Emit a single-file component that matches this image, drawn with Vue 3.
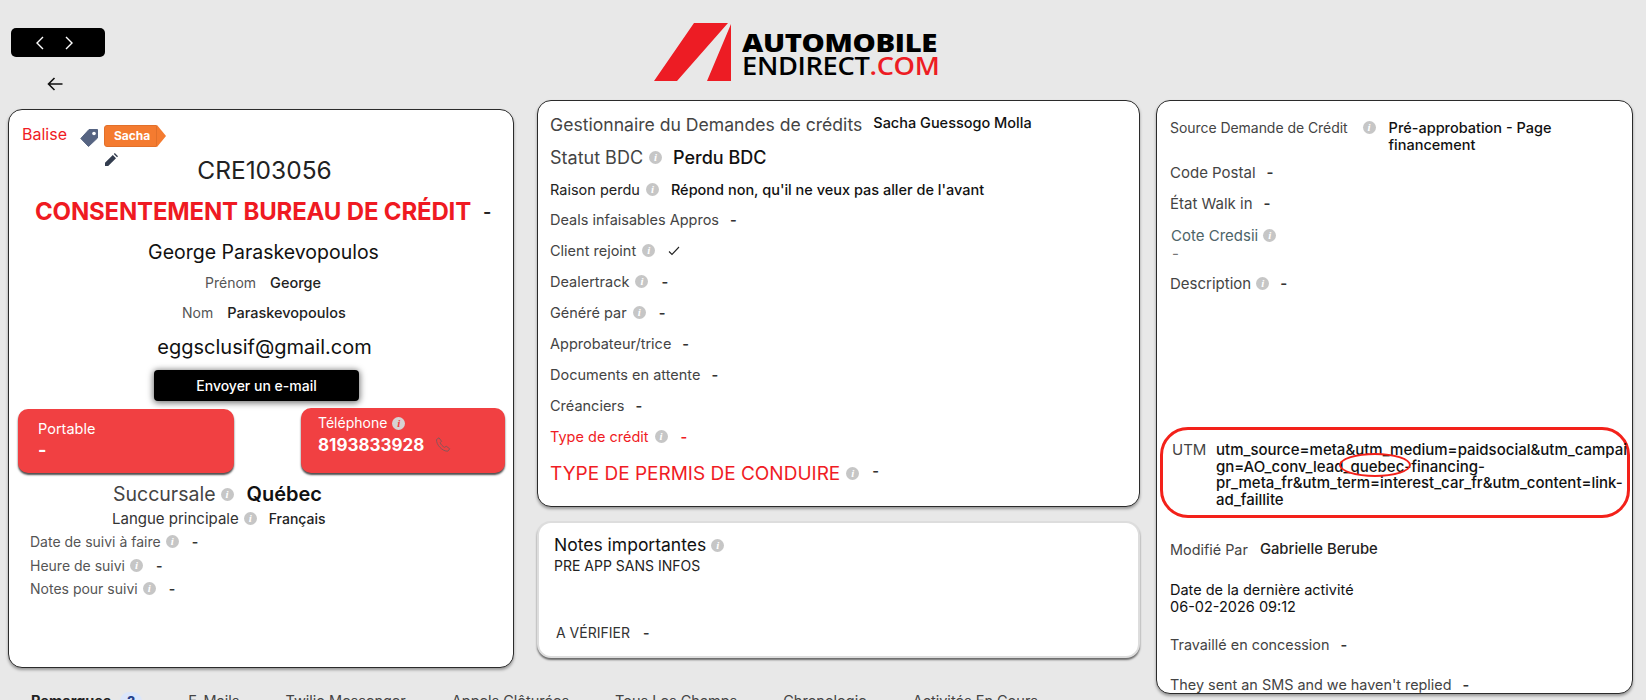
<script setup>
const midRows = [
  { label: 'Deals infaisables Appros', dash: true },
  { label: 'Client rejoint', info: true, check: true },
  { label: 'Dealertrack', info: true, dash: true },
  { label: 'Généré par', info: true, dash: true },
  { label: 'Approbateur/trice', dash: true },
  { label: 'Documents en attente', dash: true },
  { label: 'Créanciers', dash: true },
]
const followRows = [
  { label: 'Date de suivi à faire' },
  { label: 'Heure de suivi' },
  { label: 'Notes pour suivi' },
]
const tabs = ['E-Mails', 'Twilio Messenger', 'Appels Clôturées', 'Tous Les Champs', 'Chronologie', 'Activités En Cours']
</script>

<template>
  <div class="page">
    <div class="main">
      <div class="cols">
        <div class="col-left">
          <div class="nav">
            <svg width="10" height="14" viewBox="0 0 10 14"><path d="M8 1 2 7l6 6" fill="none" stroke="#fff" stroke-width="1.4"/></svg>
            <svg width="10" height="14" viewBox="0 0 10 14"><path d="M2 1l6 6-6 6" fill="none" stroke="#fff" stroke-width="1.4"/></svg>
          </div>
          <svg class="back" width="16" height="14" viewBox="0 0 16 14"><path d="M15.5 7H1.5M7.5 1 1.5 7l6 6" fill="none" stroke="#111" stroke-width="1.6"/></svg>
          <div class="peek">
            <svg width="30" height="3" viewBox="0 0 30 3"><path d="M3 0 1 3M26 0l2 3" stroke="#2a8c96" stroke-width="1" fill="none"/></svg>
          </div>
          <div class="card card-left">
            <div class="tagrow">
              <span class="balise">Balise</span>
              <svg class="tag" width="19" height="19" viewBox="0 0 19 19"><path d="M9 1.5h8.5V10L8.5 18.500 .8 10.500Z" fill="#566482" stroke="#566482" stroke-linejoin="round"/><circle cx="14" cy="5.500" r="1.800" fill="#fff"/></svg>
              <span class="sacha">Sacha</span>
              <svg class="pencil" width="13" height="13" viewBox="0 0 13 13"><path d="M0 13V9.800L7.800 2l3.200 3.200L3.200 13ZM8.800 1l1-1 3.200 3.200-1 1Z" fill="#333d4f"/></svg>
            </div>
            <div class="cre">CRE103056</div>
            <div class="consent"><span class="consent-t">CONSENTEMENT BUREAU DE CRÉDIT</span><span class="consent-d">-</span></div>
            <div class="fullname">George Paraskevopoulos</div>
            <div class="pair p1"><span class="lab">Prénom</span><span class="val">George</span></div>
            <div class="pair p2"><span class="lab">Nom</span><span class="val">Paraskevopoulos</span></div>
            <div class="email">eggsclusif@gmail.com</div>
            <div class="btn">Envoyer un e-mail</div>
            <div class="phones">
              <div class="ph ph-a">
                <div class="ph-l">Portable</div>
                <div class="ph-d">-</div>
              </div>
              <div class="ph ph-b">
                <div class="ph-l2">Téléphone<i class="info on-red">i</i></div>
                <div class="ph-n">8193833928
                  <svg class="call" width="16" height="16" viewBox="0 0 16 16"><path d="M1.500 2.500 4 .8l2.500 3.400-1.300 1.500c.8 2 2.400 3.700 4.500 4.700l1.500-1.200 3.500 2.600-1.800 2.400C7.500 14.500 1.200 8 1.500 2.500Z" fill="none" stroke="#8a5558" stroke-width="1"/></svg>
                </div>
              </div>
            </div>
            <div class="succ"><span class="succ-l">Succursale</span><i class="info">i</i><span class="succ-v">Québec</span></div>
            <div class="lang"><span class="lang-l">Langue principale</span><i class="info">i</i><span class="lang-v">Français</span></div>
            <div v-for="r in followRows" :key="r.label" class="follow">
              <span>{{ r.label }}</span><i class="info">i</i><span class="dash">-</span>
            </div>
          </div>
        </div>

        <div class="col-mid">
          <div class="logo">
            <svg class="logo-mark" width="78" height="58" viewBox="0 0 78 58"><path d="M40 0H74L23 58H0ZM77 1V58H53Z" fill="#ed1c24"/></svg>
            <div class="logo-text">
              <div class="l1">AUTOMOBILE</div>
              <div class="l2">ENDIRECT<span class="com">.COM</span></div>
            </div>
          </div>
          <div class="card card-mid">
            <div class="mrow h32"><span class="big gest">Gestionnaire du Demandes de crédits</span><span class="mgr">Sacha Guessogo Molla</span></div>
            <div class="mrow h34"><span class="big">Statut BDC</span><i class="info">i</i><span class="stat">Perdu BDC</span></div>
            <div class="mrow h30"><span class="dark">Raison perdu</span><i class="info">i</i><span class="reason">Répond non, qu'il ne veux pas aller de l'avant</span></div>
            <div v-for="r in midRows" :key="r.label" class="mrow h31">
              <span>{{ r.label }}</span><i v-if="r.info" class="info">i</i>
              <svg v-if="r.check" class="check" width="12" height="10" viewBox="0 0 12 10"><path d="M1 5.500 4 8.500 11 1" fill="none" stroke="#222" stroke-width="1.100"/></svg>
              <span v-if="r.dash" class="dash">-</span>
            </div>
            <div class="mrow h31 red"><span>Type de crédit</span><i class="info">i</i><span class="dash red">-</span></div>
            <div class="mrow h42 red"><span class="permis">TYPE DE PERMIS DE CONDUIRE</span><i class="info">i</i><span class="dash up">-</span></div>
          </div>
          <div class="card card-notes">
            <div class="notes-t">Notes importantes<i class="info">i</i></div>
            <div class="notes-b">PRE APP SANS INFOS</div>
            <div class="notes-v"><span>A VÉRIFIER</span><span class="dash">-</span></div>
          </div>
        </div>
      </div>
      <div class="tabs">
        <span class="tab-on">Remarques<b class="badge">2</b></span>
        <span v-for="t in tabs" :key="t">{{ t }}</span>
      </div>
    </div>

    <div class="col-right">
      <div class="card card-right">
        <div class="src"><span class="r-l">Source Demande de Crédit</span><i class="info">i</i><span class="src-v">Pré-approbation - Page financement</span></div>
        <div class="rrow m8"><span>Code Postal</span><span class="dash">-</span></div>
        <div class="rrow m9"><span>État Walk in</span><span class="dash">-</span></div>
        <div class="rrow m10 cote"><span>Cote Credsii</span><i class="info">i</i></div>
        <div class="cote-d">-</div>
        <div class="rrow m11"><span>Description</span><i class="info">i</i><span class="dash">-</span></div>
        <div class="utm">
          <span class="utm-l">UTM</span>
          <span class="utm-v">utm_source=meta&amp;utm_medium=paidsocial&amp;utm_campaign=AO_conv_lead_quebec-financing-pr_meta_fr&amp;utm_term=interest_car_fr&amp;utm_content=link-ad_faillite</span>
          <span class="ellipse"></span>
        </div>
        <div class="rrow m20 t14"><span>Modifié Par</span><span class="mod-v">Gabrielle Berube</span></div>
        <div class="last">Date de la dernière activité<br>06-02-2026 09:12</div>
        <div class="rrow m18 t14"><span>Travaillé en concession</span><span class="dash">-</span></div>
        <div class="rrow m18 t14"><span>They sent an SMS and we haven't replied</span><span class="dash">-</span></div>
      </div>
    </div>
  </div>
</template>

<style scoped>
.page {
  width: 1646px;
  height: 700px;
  overflow: hidden;
  display: flex;
  background: #e8e8e8;
  font-family: Inter, "Liberation Sans", sans-serif;
  color: #444;
  font-size: 14px;
}
.main { width: 1156px; flex: none; }
.cols { display: flex; height: 692px; padding-left: 8px; box-sizing: border-box; }
.card {
  background: #fff;
  border: 1px solid #2b2b2b;
  border-radius: 14px;
  box-sizing: border-box;
  box-shadow: 0 2px 3px rgba(0, 0, 0, .35);
}
.info {
  display: inline-flex;
  align-items: center;
  justify-content: center;
  flex: none;
  width: 13px;
  height: 13px;
  margin-left: 5px;
  border-radius: 50%;
  background: #c6c6c6;
  color: #fff;
  font: italic 700 11px/1 "Liberation Serif", serif;
}
.dash { font-weight: 600; color: #333; margin-left: 13px; }
.col-left { width: 506px; flex: none; }
.nav {
  margin: 28px 0 0 3px;
  width: 94px;
  height: 29px;
  background: #000;
  border-radius: 5px;
  display: flex;
  align-items: center;
  gap: 19px;
  padding-left: 24px;
  box-sizing: border-box;
}
.back { display: block; margin: 20px 0 0 39px; }
.peek { height: 2px; margin-top: 16px; padding-left: 319px; overflow: hidden; line-height: 0; }
.card-left { height: 559px; width: 506px; padding: 0 8px 0 9px; }
.tagrow { position: relative; height: 46px; display: flex; }
.balise { color: #f01c24; font-size: 16px; line-height: 20px; margin: 14px 0 0 4px; }
.tag { margin: 18px 0 0 13px; }
.sacha {
  position: relative;
  margin: 15px 0 0 5px;
  width: 53px;
  height: 22px;
  background: #f47b30;
  border: 1px solid #e2702a;
  border-radius: 3px 0 0 3px;
  box-sizing: border-box;
  color: #fff;
  font: 700 12px/20px Inter, sans-serif;
  padding-left: 9px;
}
.sacha::after {
  content: "";
  position: absolute;
  left: 52px;
  top: -1px;
  border-left: 9px solid #f47b30;
  border-top: 11px solid transparent;
  border-bottom: 11px solid transparent;
}
.pencil { position: absolute; left: 87px; top: 43px; }
.cre { text-align: center; font-size: 24.500px; line-height: 30px; color: #222; padding-left: 6px; position: relative; top: -1px; }
.consent { margin-top: 8px; height: 34px; display: flex; padding-left: 17px; align-items: center; }
.consent-t { font-size: 24px; font-weight: 700; color: #ef1a22; letter-spacing: -.17px; white-space: nowrap; }
.consent-d { margin-left: 12px; color: #222; font-size: 18px; font-weight: 600; }
.fullname { margin-top: 10px; text-align: center; font-size: 19.500px; line-height: 28px; color: #111; padding-left: 4px; }
.pair { margin-top: 7px; height: 20px; line-height: 20px; display: flex; gap: 14px; }
.p1 { padding-left: 187px; }
.p2 { margin-top: 10px; padding-left: 164px; }
.lab { color: #555; }
.val { color: #222; font-weight: 500; font-size: 14.500px; }
.email { margin-top: 11px; text-align: center; font-size: 20px; line-height: 26px; color: #111; padding-left: 6px; }
.btn {
  margin: 10px 0 0 136px;
  width: 205px;
  height: 31px;
  line-height: 31px;
  background: #000;
  border-radius: 4px;
  color: #fff;
  text-align: center;
  font-size: 14px;
  font-weight: 500;
  box-shadow: 0 1px 6px 1px rgba(0, 0, 0, .55);
}
.phones { margin-top: 7px; display: flex; justify-content: space-between; align-items: flex-end; }
.ph {
  background: #f14042;
  color: #fff;
  border-radius: 10px;
  box-shadow: 0 2px 2px rgba(0, 0, 0, .7);
  box-sizing: border-box;
}
.ph-a { width: 216px; height: 64px; padding: 11px 0 0 20px; }
.ph-b { width: 204px; height: 65px; padding: 6px 0 0 17px; }
.ph-l { font-size: 14.500px; line-height: 18px; }
.ph-d { font-size: 18px; font-weight: 700; line-height: 24px; }
.ph-l2 { font-size: 14px; line-height: 18px; display: flex; align-items: center; }
.on-red { background: #d7d2d2; color: #f14042; }
.ph-n { font-size: 17px; font-weight: 700; line-height: 26px; display: flex; align-items: center; }
.call { margin-left: 11px; }
.succ { margin-top: 8px; height: 26px; display: flex; align-items: center; padding-left: 95px; }
.succ-l { font-size: 19.500px; color: #444; }
.succ-v { font-size: 20px; font-weight: 600; color: #111; margin-left: 13px; }
.lang { height: 23px; display: flex; align-items: center; padding-left: 94px; }
.lang-l { font-size: 15px; color: #333; }
.lang-v { font-size: 14px; font-weight: 500; color: #222; margin-left: 12px; }
.follow { height: 23.500px; display: flex; align-items: center; padding-left: 12px; font-size: 14px; color: #555; }
.col-mid { width: 603px; flex: none; margin-left: 23px; }
.logo { height: 100px; padding: 23px 0 0 117px; box-sizing: border-box; display: flex; }
.logo-text { margin: 7px 0 0 10px; color: #000; font-family: "Open Sans", sans-serif; white-space: nowrap; }
.l1 { font-size: 25px; font-weight: 800; line-height: 24px; letter-spacing: -.3px; transform: scaleX(1.17); transform-origin: left; }
.l2 { font-size: 25px; font-weight: 600; line-height: 23px; letter-spacing: -.3px; transform: scaleX(1.09); transform-origin: left; }
.com { color: #ed1c24; }
.card-mid { height: 407px; padding: 7px 12px 0; }
.mrow { display: flex; align-items: center; white-space: nowrap; }
.h32 { height: 32px; }
.h34 { height: 34px; }
.h30 { height: 30px; }
.h31 { height: 31px; }
.h42 { height: 42px; }
.mrow { font-size: 14.500px; color: #444; }
.mrow .info { margin-left: 6px; }
.big { font-size: 18px; color: #444; }
.gest { font-size: 17.600px; }
.mgr { font-size: 14.500px; font-weight: 500; color: #111; margin: -4px 0 0 11px; }
.stat { font-size: 18px; font-weight: 500; color: #111; margin-left: 11px; }
.dark { color: #222; }
.reason { color: #111; font-weight: 500; margin-left: 12px; }
.check { margin-left: 13px; }
.mrow .dash { margin-left: 11px; }
.mrow .info + .dash { margin-left: 13px; }
.red, .red span { color: #f01c24; }
.dash.red { color: #f01c24; }
.permis { font-size: 19px; }
.mrow .dash.up { position: relative; top: -3px; color: #333; margin-left: 13px; }
.card-notes {
  margin-top: 14px;
  height: 137px;
  border: 2px solid #ddd;
  padding: 11px 15px 0;
  box-shadow: 0 2px 2px rgba(0, 0, 0, .55);
}
.notes-t { font-size: 17.500px; line-height: 22px; color: #111; display: flex; align-items: center; }
.notes-b { font-size: 14px; line-height: 18px; color: #222; margin-top: 1px; }
.notes-v { margin: 48px 0 0 2px; font-size: 14px; line-height: 20px; color: #333; display: flex; }
.tabs { display: flex; gap: 46px; padding-left: 31px; font-size: 14.500px; line-height: 18px; color: #444; white-space: nowrap; }
.tab-on { font-weight: 700; color: #222; display: flex; align-items: flex-start; }
.badge {
  display: block;
  margin-left: 9px;
  width: 22px;
  height: 18px;
  line-height: 18px;
  border-radius: 9px;
  background: #dbe6fb;
  text-align: center;
  font-size: 12px;
  color: #23408e;
}
.col-right { margin-top: 100px; margin-left: 0; width: 477px; flex: none; }
.card-right { height: 594px; overflow: hidden; padding: 18px 0 0; font-size: 15px; color: #444; }
.src { display: flex; padding-left: 13px; line-height: 17px; }
.r-l { font-size: 14px; letter-spacing: -.05px; }
.src-v { margin-left: 13px; width: 200px; color: #111; font-weight: 500; font-size: 14.500px; }
.src .info { margin: 2px 0 0 15px; }
.rrow { height: 22px; display: flex; align-items: center; padding-left: 13px; white-space: nowrap; }
.rrow .dash { margin-left: 11px; }
.t14 { font-size: 14.400px; }
.m8 { margin-top: 8px; }
.m9 { margin-top: 9px; }
.m10 { margin-top: 10px; }
.m11 { margin-top: 11px; }
.m20 { margin-top: 20px; }
.m18 { margin-top: 18px; }
.cote { color: #4d6468; padding-left: 14px; }
.cote-d { height: 14px; line-height: 14px; padding-left: 15px; color: #777; margin-top: 1px; }
.utm {
  position: relative;
  display: flex;
  box-sizing: border-box;
  width: 470px;
  height: 91px;
  margin: 133px 0 0 3px;
  padding: 12px 0 0 9px;
  border: 3px solid #f3211a;
  border-radius: 28px;
  line-height: 16.500px;
}
.utm-l { width: 44px; flex: none; color: #444; }
.utm-v { width: 413px; flex: none; overflow-wrap: anywhere; color: #111; font-weight: 500; }
.ellipse {
  position: absolute;
  left: 176px;
  top: 23px;
  width: 72px;
  height: 24px;
  border: 2px solid #f3211a;
  border-radius: 50%;
  box-sizing: border-box;
}
.mod-v { color: #222; font-weight: 500; font-size: 14.800px; margin-left: 12px; }
.last { margin: 21px 0 0 13px; line-height: 17px; color: #111; font-size: 14.500px; }
</style>

<style>
html, body { margin: 0; background: #e8e8e8; }
</style>
